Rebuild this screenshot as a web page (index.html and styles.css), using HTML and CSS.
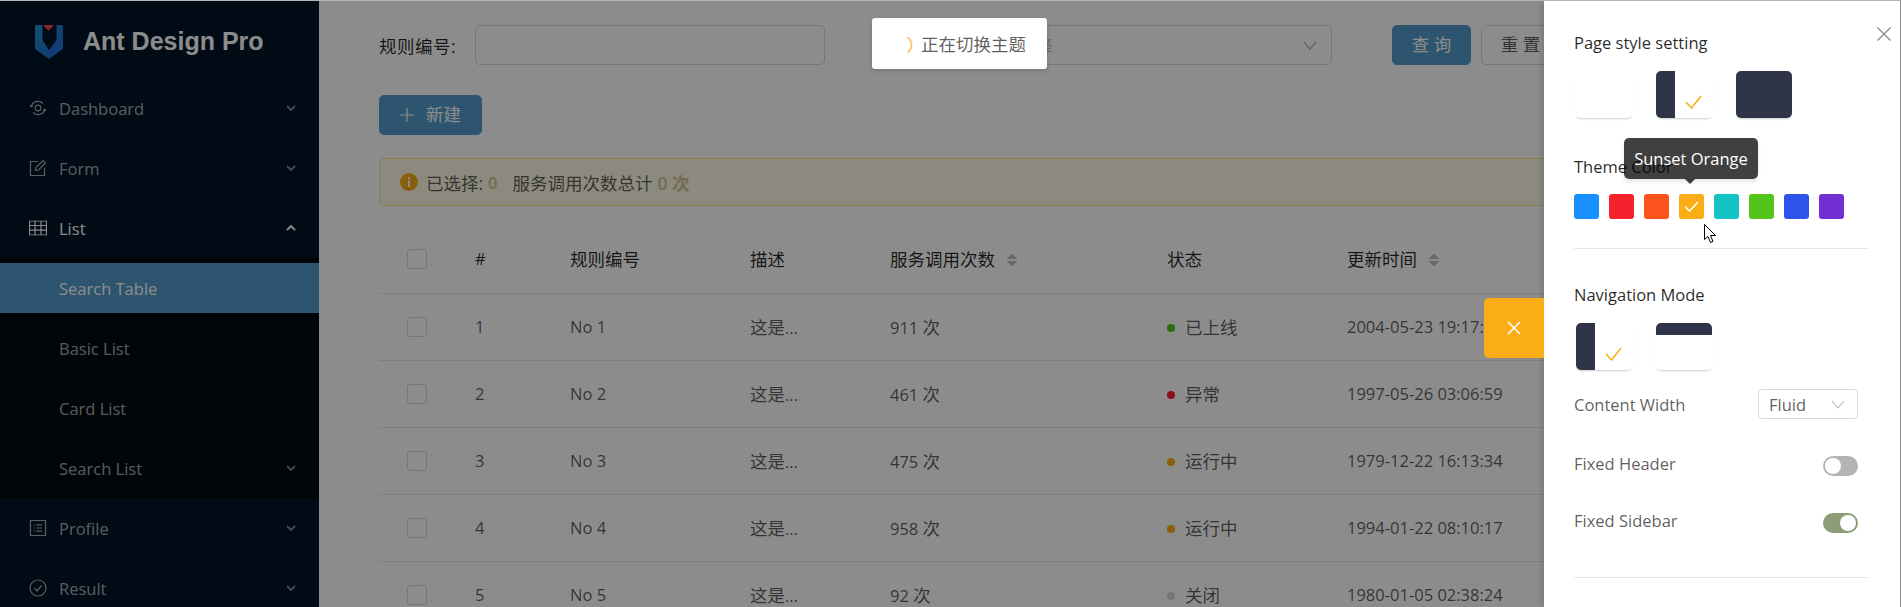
FILE: index.html
```html
<!DOCTYPE html>
<html lang="zh-CN">
<head>
    <meta charset="UTF-8">
    <meta name="viewport" content="width=device-width, initial-scale=1.0">
    <title>Ant Design Pro</title>
    <link rel="stylesheet" href="styles.css">
</head>
<body>
    <div class="app">
        <nav class="sidebar">
            <div class="logo">
                <svg class="logo-mark" width="28" height="35" viewBox="0 0 28 35">
                    <defs>
                        <linearGradient id="logo-blue" x1="0" y1="0" x2="1" y2="1">
                            <stop offset="0" stop-color="#2494cf"/>
                            <stop offset="1" stop-color="#1f62d4"/>
                        </linearGradient>
                    </defs>
                    <path d="M1 1 H7.5 V16 L14 26 L21.5 16 V1 H27 L28 2 V25 L14 35 L0 25 V2 Z" fill="url(#logo-blue)"/>
                    <path d="M8 1 H19 L13.5 7 Z" fill="#ea4a4e"/>
                </svg>
                <span class="logo-title">Ant Design Pro</span>
            </div>
            <div class="menu">
                <div class="menu-item">
                    <svg class="menu-icon" width="18" height="18" viewBox="0 0 18 18">
                        <circle cx="9" cy="9" r="2.8"/>
                        <path d="M2.2 7.6 C3 4.2 6 2.4 9 2.4 C11 2.4 12.8 3.2 14 4.6 M15.8 10.4 C15 13.8 12 15.6 9 15.6 C7 15.6 5.2 14.8 4 13.4 M1 6.2 L2.2 7.8 L4 6.8 M17 11.8 L15.8 10.2 L14 11.2"/>
                    </svg>
                    <span>Dashboard</span>
                    <svg class="chevron" width="10" height="6" viewBox="0 0 10 6"><path d="M1 1 L5 5 L9 1"/></svg>
                </div>
                <div class="menu-item">
                    <svg class="menu-icon" width="18" height="18" viewBox="0 0 18 18">
                        <path d="M9 2.5 H1.5 V16.5 H15.5 V9"/>
                        <path d="M6.5 11.5 L7 8.5 L14 1.5 L16.5 4 L9.5 11 Z"/>
                    </svg>
                    <span>Form</span>
                    <svg class="chevron" width="10" height="6" viewBox="0 0 10 6"><path d="M1 1 L5 5 L9 1"/></svg>
                </div>
                <div class="menu-item active">
                    <svg class="menu-icon" width="18" height="15" viewBox="0 0 18 15">
                        <path d="M.5 .5 H17.5 V14.5 H.5 Z M.5 5 H17.5 M.5 9.7 H17.5 M6 .5 V14.5 M12 .5 V14.5"/>
                    </svg>
                    <span>List</span>
                    <svg class="chevron" width="10" height="6" viewBox="0 0 10 6"><path d="M1 5 L5 1 L9 5"/></svg>
                </div>
                <div class="submenu">
                    <div class="menu-item sub selected"><span>Search Table</span></div>
                    <div class="menu-item sub"><span>Basic List</span></div>
                    <div class="menu-item sub"><span>Card List</span></div>
                    <div class="menu-item sub">
                        <span>Search List</span>
                        <svg class="chevron" width="10" height="6" viewBox="0 0 10 6"><path d="M1 1 L5 5 L9 1"/></svg>
                    </div>
                </div>
                <div class="menu-item">
                    <svg class="menu-icon" width="18" height="16" viewBox="0 0 18 16">
                        <path d="M1.5 .5 H16.5 V15.5 H1.5 Z M7.5 4.8 H13 M7.5 8 H13 M7.5 11.2 H13 M5 4.8 H6 M5 8 H6 M5 11.2 H6"/>
                    </svg>
                    <span>Profile</span>
                    <svg class="chevron" width="10" height="6" viewBox="0 0 10 6"><path d="M1 1 L5 5 L9 1"/></svg>
                </div>
                <div class="menu-item">
                    <svg class="menu-icon" width="18" height="18" viewBox="0 0 18 18">
                        <circle cx="9" cy="9" r="8"/>
                        <path d="M5.2 9.2 L8 12 L12.8 6.4"/>
                    </svg>
                    <span>Result</span>
                    <svg class="chevron" width="10" height="6" viewBox="0 0 10 6"><path d="M1 1 L5 5 L9 1"/></svg>
                </div>
            </div>
        </nav>

        <main class="content">
            <form class="search-form">
                <label class="form-label zh">规则编号:</label>
                <div class="field"></div>
                <label class="form-label second zh">使用状态:</label>
                <div class="field select-field">
                    <span class="placeholder zh">请选择</span>
                    <svg class="select-arrow" width="14" height="9" viewBox="0 0 14 9"><path d="M1 1 L7 8 L13 1"/></svg>
                </div>
                <button type="button" class="btn primary zh search-btn">查 询</button>
                <button type="button" class="btn zh">重 置</button>
            </form>

            <button type="button" class="btn primary new-btn">
                <svg width="14" height="14" viewBox="0 0 14 14"><path d="M7 0 V14 M0 7 H14"/></svg>
                <span class="zh">新建</span>
            </button>

            <div class="alert">
                <svg class="alert-icon" width="18" height="18" viewBox="0 0 18 18">
                    <circle cx="9" cy="9" r="9" fill="#faad14"/>
                    <rect x="8" y="7.5" width="2" height="6.5" fill="#fff"/>
                    <rect x="8" y="4" width="2" height="2" fill="#fff"/>
                </svg>
                <span class="zh">已选择:</span>
                <strong class="count">0</strong>
                <span class="zh total-label">服务调用次数总计</span>
                <strong class="count zh">0 次</strong>
            </div>

            <table class="rules">
                <thead>
                    <tr>
                        <th class="col-check"><span class="checkbox"></span></th>
                        <th class="col-id">#</th>
                        <th class="col-no zh">规则编号</th>
                        <th class="col-desc zh">描述</th>
                        <th class="col-calls"><span class="zh">服务调用次数</span><span class="sorter"></span></th>
                        <th class="col-status zh">状态</th>
                        <th class="col-time"><span class="zh">更新时间</span><span class="sorter"></span></th>
                    </tr>
                </thead>
                <tbody>
                    <tr>
                        <td><span class="checkbox"></span></td>
                        <td>1</td>
                        <td>No 1</td>
                        <td><span class="zh">这是</span>...</td>
                        <td>911 <span class="zh">次</span></td>
                        <td><span class="dot green"></span><span class="zh">已上线</span></td>
                        <td>2004-05-23 19:17:08</td>
                    </tr>
                    <tr>
                        <td><span class="checkbox"></span></td>
                        <td>2</td>
                        <td>No 2</td>
                        <td><span class="zh">这是</span>...</td>
                        <td>461 <span class="zh">次</span></td>
                        <td><span class="dot red"></span><span class="zh">异常</span></td>
                        <td>1997-05-26 03:06:59</td>
                    </tr>
                    <tr>
                        <td><span class="checkbox"></span></td>
                        <td>3</td>
                        <td>No 3</td>
                        <td><span class="zh">这是</span>...</td>
                        <td>475 <span class="zh">次</span></td>
                        <td><span class="dot orange"></span><span class="zh">运行中</span></td>
                        <td>1979-12-22 16:13:34</td>
                    </tr>
                    <tr>
                        <td><span class="checkbox"></span></td>
                        <td>4</td>
                        <td>No 4</td>
                        <td><span class="zh">这是</span>...</td>
                        <td>958 <span class="zh">次</span></td>
                        <td><span class="dot orange"></span><span class="zh">运行中</span></td>
                        <td>1994-01-22 08:10:17</td>
                    </tr>
                    <tr>
                        <td><span class="checkbox"></span></td>
                        <td>5</td>
                        <td>No 5</td>
                        <td><span class="zh">这是</span>...</td>
                        <td>92 <span class="zh">次</span></td>
                        <td><span class="dot gray"></span><span class="zh">关闭</span></td>
                        <td>1980-01-05 02:38:24</td>
                    </tr>
                </tbody>
            </table>
        </main>
    </div>

    <div class="mask"></div>

    <div class="toast">
        <svg class="spinner" width="20" height="20" viewBox="0 0 20 20"><path d="M14.5 2.5 A9 9 0 0 1 14.5 17.5"/></svg>
        <span class="zh">正在切换主题</span>
    </div>

    <aside class="drawer">
        <div class="drawer-handle">
            <svg width="14" height="14" viewBox="0 0 14 14"><path d="M1 1 L13 13 M13 1 L1 13"/></svg>
        </div>
        <svg class="drawer-close" width="14" height="14" viewBox="0 0 14 14"><path d="M.5 .5 L13.5 13.5 M13.5 .5 L.5 13.5"/></svg>

        <h3 class="drawer-title">Page style setting</h3>
        <div class="style-cards">
            <div class="style-card"></div>
            <div class="style-card side-dark">
                <svg class="tick" width="17" height="14" viewBox="0 0 17 14"><path d="M1 7 L6.5 13 L16 1"/></svg>
            </div>
            <div class="style-card all-dark"></div>
        </div>

        <h3 class="drawer-title theme-title">Theme Color</h3>
        <div class="swatches">
            <span class="swatch blue"></span>
            <span class="swatch red"></span>
            <span class="swatch volcano"></span>
            <span class="swatch gold">
                <svg width="15" height="11" viewBox="0 0 15 11"><path d="M1 5.5 L5.5 10 L14 1"/></svg>
            </span>
            <span class="swatch cyan"></span>
            <span class="swatch green"></span>
            <span class="swatch geek"></span>
            <span class="swatch purple"></span>
        </div>
        <div class="tooltip">Sunset Orange</div>
        <svg class="cursor" width="13" height="20" viewBox="0 0 13 20"><path d="M.5 .5 V15.5 L4 12.5 L6.5 18.5 L9 17.5 L6.5 11.5 L11.5 11.5 Z"/></svg>

        <hr class="divider first-divider">

        <h3 class="drawer-title nav-title">Navigation Mode</h3>
        <div class="style-cards">
            <div class="style-card side-dark">
                <svg class="tick" width="17" height="14" viewBox="0 0 17 14"><path d="M1 7 L6.5 13 L16 1"/></svg>
            </div>
            <div class="style-card top-dark"></div>
        </div>

        <div class="setting-row width-row">
            <span class="setting-label">Content Width</span>
            <div class="mini-select">
                <span>Fluid</span>
                <svg width="14" height="9" viewBox="0 0 14 9"><path d="M1 1 L7 8 L13 1"/></svg>
            </div>
        </div>
        <div class="setting-row toggle-row">
            <span class="setting-label">Fixed Header</span>
            <span class="toggle"></span>
        </div>
        <div class="setting-row toggle-row">
            <span class="setting-label">Fixed Sidebar</span>
            <span class="toggle on"></span>
        </div>

        <hr class="divider last-divider">
    </aside>
</body>
</html>
```

FILE: styles.css
```css
* {
    box-sizing: border-box;
}

html, body {
    height: 100%;
}

body {
    position: relative;
    margin: 0;
    overflow: hidden;
    height: 607px;
    border-top: 1px solid #b4b4b4;
    border-right: 1px solid #8c8c8c;
    background-color: #fff;
    font-family: "Open Sans", "Noto Sans CJK SC", sans-serif;
    font-size: 16.5px;
    color: rgba(0, 0, 0, 0.65);
}

.zh {
    font-size: 17.5px;
}

.app {
    display: flex;
    height: 606px;
}

/* sidebar */
.sidebar {
    flex: 0 0 319px;
    background-color: #001529;
    color: rgba(255, 255, 255, 0.65);
}

.logo {
    display: flex;
    align-items: center;
    height: 80px;
    padding-left: 35px;
}

.logo-title {
    margin-left: 20px;
    font-family: "Liberation Sans", sans-serif;
    font-size: 25px;
    font-weight: 700;
    color: #fff;
}

.menu {
    display: flex;
    flex-direction: column;
    gap: 10px;
    padding-top: 2px;
}

.menu-item {
    display: flex;
    align-items: center;
    flex: 0 0 50px;
    height: 50px;
    padding-left: 59px;
    position: relative;
}

.menu-icon {
    position: absolute;
    left: 29px;
    top: 50%;
    transform: translateY(-50%);
    fill: none;
    stroke: currentColor;
    stroke-width: 1.2;
}

.chevron {
    margin-left: auto;
    margin-right: 23px;
    fill: none;
    stroke: rgba(255, 255, 255, 0.5);
    stroke-width: 1.8;
}

.menu-item.active {
    color: #fff;
}

.menu-item.active .chevron {
    stroke: #fff;
}

.submenu {
    display: flex;
    flex-direction: column;
    gap: 10px;
    margin: -5px 0;
    padding: 5px 0;
    background-color: #040a10;
    box-shadow: inset 0 3px 3px rgba(0, 0, 0, 0.45);
}

.menu-item.selected {
    background-color: #529bca;
    color: #fff;
}

/* main area */
.content {
    flex: 1;
    min-width: 0;
    padding: 24px 0 0 60px;
}

.search-form {
    display: flex;
    align-items: center;
    height: 40px;
}

.form-label {
    flex: 0 0 96px;
    letter-spacing: 0.5px;
    color: rgba(0, 0, 0, 0.85);
}

.form-label.second {
    margin-left: 60px;
}

.field {
    display: flex;
    align-items: center;
    justify-content: space-between;
    flex: 0 0 350px;
    height: 40px;
    padding: 0 14px;
    border: 1px solid #d9d9d9;
    border-radius: 5px;
    background-color: #fff;
}

.select-field {
    flex-basis: 351px;
    padding-left: 18px;
}

.placeholder {
    color: #bfbfbf;
}

.select-arrow {
    fill: none;
    stroke: rgba(0, 0, 0, 0.3);
    stroke-width: 1.2;
}

.btn {
    flex: 0 0 79px;
    height: 40px;
    padding: 0;
    border: 1px solid #d9d9d9;
    border-radius: 5px;
    background-color: #fff;
    color: rgba(0, 0, 0, 0.65);
    font-family: inherit;
    line-height: 1;
}

.btn.primary {
    border-color: #529bca;
    background-color: #529bca;
    color: #fff;
}

.search-btn {
    margin-left: 60px;
    margin-right: 10px;
}

.new-btn {
    display: flex;
    align-items: center;
    justify-content: center;
    gap: 12px;
    width: 103px;
    margin-top: 30px;
}

.new-btn svg {
    fill: none;
    stroke: #fff;
    stroke-width: 1.2;
}

.alert {
    display: flex;
    align-items: center;
    width: 1400px;
    height: 48px;
    margin-top: 23px;
    padding-left: 20px;
    border: 1px solid #ffe58f;
    border-radius: 5px;
    background-color: #fffbe6;
}

.alert-icon {
    margin-right: 8px;
}

.count {
    margin-left: 5px;
    font-weight: 600;
    color: #d2c492;
}

.total-label {
    margin-left: 15px;
}

.rules {
    width: 1400px;
    margin-top: 19px;
    border-collapse: collapse;
    table-layout: fixed;
}

.rules th,
.rules td {
    height: 67px;
    padding: 0;
    border-bottom: 1px solid #e8e8e8;
    text-align: left;
    font-weight: 400;
}

.rules th {
    height: 68px;
    color: rgba(0, 0, 0, 0.85);
}

.rules th:first-child,
.rules td:first-child {
    padding-left: 28px;
}

.col-check { width: 96px; }
.col-id { width: 95px; }
.col-no { width: 180px; }
.col-desc { width: 140px; }
.col-calls { width: 277px; }
.col-status { width: 180px; }

.checkbox {
    display: block;
    width: 20px;
    height: 20px;
    border: 1px solid #d9d9d9;
    border-radius: 3px;
    background-color: #fff;
}

.sorter {
    display: inline-block;
    width: 10px;
    height: 14px;
    margin-left: 12px;
    vertical-align: -1px;
    background:
        linear-gradient(to bottom right, transparent 49%, #bfbfbf 51%) 0 0 / 5px 6px no-repeat,
        linear-gradient(to bottom left, transparent 49%, #bfbfbf 51%) 5px 0 / 5px 6px no-repeat,
        linear-gradient(to top right, transparent 49%, #bfbfbf 51%) 0 8px / 5px 6px no-repeat,
        linear-gradient(to top left, transparent 49%, #bfbfbf 51%) 5px 8px / 5px 6px no-repeat;
}

.dot {
    display: inline-block;
    width: 8px;
    height: 8px;
    margin-right: 10px;
    border-radius: 50%;
    vertical-align: 2px;
}

.dot.green { background-color: #52c41a; }
.dot.red { background-color: #f5222d; }
.dot.orange { background-color: #faad14; }
.dot.gray { background-color: #d9d9d9; }

/* overlays */
.mask {
    position: absolute;
    inset: 0;
    background-color: rgba(0, 0, 0, 0.45);
}

.toast {
    position: absolute;
    left: 872px;
    top: 17px;
    display: flex;
    align-items: center;
    width: 175px;
    height: 51px;
    padding-left: 49px;
    border-radius: 3px;
    background-color: #fff;
    box-shadow: 0 2px 4px rgba(0, 0, 0, 0.15);
}

.spinner {
    position: absolute;
    left: 21px;
    top: 17px;
    fill: none;
    stroke: #fbc766;
    stroke-width: 1.8;
}

.drawer {
    position: absolute;
    top: 0;
    left: 1544px;
    bottom: 0;
    width: 356px;
    padding: 30px 32px 0 30px;
    background-color: #fff;
    box-shadow: -2px 0 6px rgba(0, 0, 0, 0.15);
}

.drawer-handle {
    position: absolute;
    left: -60px;
    top: 297px;
    display: flex;
    align-items: center;
    justify-content: center;
    width: 60px;
    height: 60px;
    border-radius: 5px 0 0 5px;
    background-color: #faad14;
}

.drawer-handle svg {
    fill: none;
    stroke: #fff;
    stroke-width: 1.6;
}

.drawer-close {
    position: absolute;
    right: 9px;
    top: 26px;
    fill: none;
    stroke: #8c8c8c;
    stroke-width: 1.4;
}

.drawer-title {
    margin: 0;
    font-size: 16.5px;
    line-height: 24px;
    font-weight: 500;
    color: rgba(0, 0, 0, 0.85);
}

.style-cards {
    display: flex;
    gap: 24px;
    margin: 16px 0 0 2px;
}

.style-card {
    position: relative;
    width: 56px;
    height: 47px;
    border-radius: 5px;
    background-color: #fff;
    box-shadow: 0 2px 2px -1px rgba(0, 0, 0, 0.2);
}

.style-card.side-dark {
    background: linear-gradient(to right, #303448 19px, #fff 19px);
}

.style-card.all-dark {
    background-color: #303448;
}

.style-card.top-dark {
    background: linear-gradient(to bottom, #303448 12px, #fff 12px);
}

.tick {
    position: absolute;
    left: 29px;
    top: 24px;
    fill: none;
    stroke: #faad14;
    stroke-width: 1.5;
}

.theme-title {
    margin-top: 37px;
}

.swatches {
    display: flex;
    gap: 10px;
    margin-top: 15px;
}

.swatch {
    display: flex;
    align-items: center;
    justify-content: center;
    width: 25px;
    height: 25px;
    border-radius: 3px;
}

.swatch svg {
    fill: none;
    stroke: #fff;
    stroke-width: 1.6;
}

.swatch.blue { background-color: #1890ff; }
.swatch.red { background-color: #f5222d; }
.swatch.volcano { background-color: #fa541c; }
.swatch.gold { background-color: #faad14; }
.swatch.cyan { background-color: #13c2c2; }
.swatch.green { background-color: #52c41a; }
.swatch.geek { background-color: #2f54eb; }
.swatch.purple { background-color: #722ed1; }

.tooltip {
    position: absolute;
    left: 80px;
    top: 137px;
    width: 134px;
    height: 41px;
    border-radius: 5px;
    background-color: rgba(0, 0, 0, 0.75);
    box-shadow: 0 3px 4px rgba(0, 0, 0, 0.1);
    text-align: center;
    line-height: 41px;
    color: #fff;
}

.tooltip::after {
    content: "";
    position: absolute;
    left: 61px;
    top: 41px;
    border: 5px solid transparent;
    border-bottom-width: 0;
    border-top-color: rgba(0, 0, 0, 0.75);
}

.cursor {
    position: absolute;
    left: 160px;
    top: 223px;
    fill: #fff;
    stroke: #000;
    stroke-width: 1;
}

.divider {
    height: 1px;
    margin: 0;
    border: 0;
    background-color: #e8e8e8;
}

.first-divider {
    margin-top: 29px;
}

.nav-title {
    margin-top: 34px;
}

.setting-row {
    display: flex;
    align-items: center;
    justify-content: space-between;
    margin-right: 10px;
}

.width-row {
    margin-top: 19px;
}

.toggle-row {
    margin-top: 37px;
}

.toggle-row .setting-label {
    margin-bottom: 4px;
    line-height: 16px;
}

.mini-select {
    display: flex;
    align-items: center;
    justify-content: space-between;
    width: 100px;
    height: 30px;
    padding: 0 12px 0 10px;
    border: 1px solid #d9d9d9;
    border-radius: 3px;
}

.mini-select svg {
    fill: none;
    stroke: rgba(0, 0, 0, 0.3);
    stroke-width: 1.1;
}

.toggle {
    position: relative;
    width: 35px;
    height: 20px;
    border-radius: 10px;
    background-color: #b4b4b4;
}

.toggle::after {
    content: "";
    position: absolute;
    left: 2px;
    top: 2px;
    width: 16px;
    height: 16px;
    border-radius: 50%;
    background-color: #fff;
}

.toggle.on {
    background-color: #8e9d77;
}

.toggle.on::after {
    left: 17px;
}

.last-divider {
    margin-top: 44px;
}
```
